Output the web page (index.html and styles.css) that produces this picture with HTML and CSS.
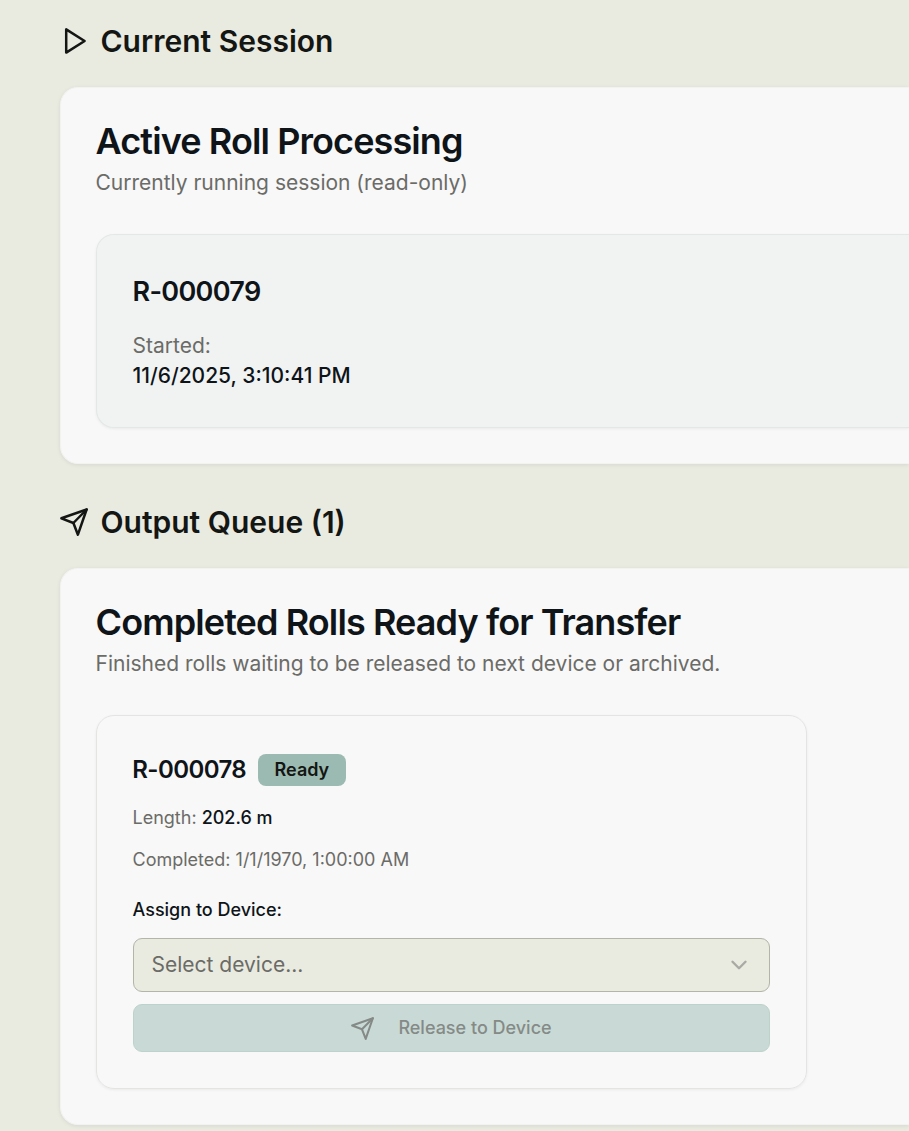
FILE: index.html
```html
<!DOCTYPE html>
<html lang="en">
<head>
  <meta charset="UTF-8">
  <title>Roll Queue</title>
  <link rel="stylesheet" href="styles.css">
</head>
<body>

<main class="page">
  <section class="section">
    <h2 class="section-title">
      <svg class="icon" viewBox="0 0 28 28"><path d="M6.2 2.4v23.2L24.6 14z"/></svg>
      Current Session
    </h2>
    <div class="card">
      <div class="card-title">Active Roll Processing</div>
      <p class="card-desc">Currently running session (read-only)</p>

      <div class="session">
        <div class="session-id">R-000079</div>
        <div class="session-label">Started:</div>
        <div class="session-value">11/6/2025, 3:10:41 PM</div>
      </div>
    </div>
  </section>

  <section class="section">
    <h2 class="section-title">
      <svg class="icon" viewBox="0 0 28 28"><path d="M26.6 1.5 1.4 10.3l12 4.7 4.5 11.7z"/><path d="M26.6 1.5 13.4 15"/></svg>
      Output Queue (1)
    </h2>
    <div class="card">
      <div class="card-title">Completed Rolls Ready for Transfer</div>
      <p class="card-desc">Finished rolls waiting to be released to next device or archived.</p>

      <div class="roll">
        <div class="roll-header">
          <span class="roll-id">R-000078</span>
          <span class="badge">Ready</span>
        </div>
        <div class="roll-row">Length: <strong>202.6 m</strong></div>
        <div class="roll-row">Completed: 1/1/1970, 1:00:00 AM</div>
        <div class="roll-label">Assign to Device:</div>
        <div class="select">
          <span>Select device...</span>
          <svg class="chevron" viewBox="0 0 24 24"><path d="m6 9 6 6 6-6"/></svg>
        </div>
        <button class="release-btn" disabled>
          <svg class="icon" viewBox="0 0 28 28"><path d="M26.6 1.5 1.4 10.3l12 4.7 4.5 11.7z"/><path d="M26.6 1.5 13.4 15"/></svg>
          <span>Release to Device</span>
        </button>
      </div>
    </div>
  </section>
</main>

</body>
</html>
```

FILE: styles.css
```css
* {
  margin: 0;
  padding: 0;
  box-sizing: border-box;
}

body {
  font-family: 'Inter', sans-serif;
  background-color: #e9eae0;
  color: #0f1419;
  height: 1131px;
  overflow: hidden;
}

.page {
  padding: 20px 0 0 60px;
}

.section {
  margin-bottom: 37px;
}

.section-title {
  display: flex;
  align-items: center;
  gap: 12.5px;
  height: 42px;
  margin-bottom: 25px;
  font-size: 30px;
  font-weight: 600;
  color: #141613;
}

.icon {
  width: 28px;
  height: 28px;
  flex-shrink: 0;
  fill: none;
  stroke: currentColor;
  stroke-width: 2.5;
  stroke-linecap: round;
  stroke-linejoin: round;
}

/* cards run off the right side of the window */
.card {
  background-color: #f8f8f8;
  border: 1px solid #f2f2f0;
  border-right: none;
  border-radius: 18px 0 0 18px;
  padding: 35px 0 35px 35px;
  box-shadow: 0 1px 4px rgba(0, 0, 0, 0.08);
}

.card-title {
  margin-left: -0.5px;
  font-size: 36px;
  line-height: 36px;
  font-weight: 600;
  letter-spacing: -0.9px;
}

.card-desc {
  margin-top: 9px;
  margin-left: -0.5px;
  font-size: 21px;
  line-height: 30px;
  color: #6b6b67;
}

.session {
  margin-top: 36px;
  height: 194px;
  padding: 36px 0 35px 35.5px;
  background-color: #f1f3f2;
  border: 1px solid #e3e8e6;
  border-right: none;
  border-radius: 18px 0 0 18px;
  box-shadow: 0 1px 3px rgba(0, 0, 0, 0.06);
}

.session-id {
  font-size: 27px;
  line-height: 42px;
  font-weight: 600;
  letter-spacing: -0.675px;
}

.session-label,
.session-value {
  font-size: 21px;
  line-height: 30px;
}

.session-label {
  margin-top: 18px;
  color: #6b6b67;
}

.session-value {
  font-weight: 500;
}

.roll {
  width: 711px;
  height: 374px;
  margin-top: 36px;
  padding: 36px 36px 35px;
  border: 1px solid #e4e4e3;
  border-radius: 18px;
  box-shadow: 0 1px 3px rgba(0, 0, 0, 0.06);
}

.roll-header {
  display: flex;
  align-items: center;
  gap: 12px;
  height: 36px;
  margin-left: -0.7px;
}

.roll-id {
  padding-bottom: 2px;
  font-size: 24px;
  font-weight: 600;
  letter-spacing: -0.6px;
}

.badge {
  height: 32px;
  padding: 0 16.5px;
  border-radius: 8px;
  background-color: #9bbab1;
  color: #141613;
  font-size: 18px;
  line-height: 32px;
  font-weight: 600;
}

.roll-row {
  margin-top: 18px;
  margin-left: -0.5px;
  font-size: 18px;
  line-height: 24px;
  color: #6b6b67;
}

.roll-row strong {
  font-weight: 500;
  color: #0f1419;
}

.roll-label {
  margin-top: 26px;
  margin-left: -0.5px;
  font-size: 18px;
  line-height: 24px;
  font-weight: 500;
}

.select {
  display: flex;
  align-items: center;
  justify-content: space-between;
  height: 54px;
  margin-top: 16px;
  padding: 0 17px 0 17.5px;
  background-color: #e9eae0;
  border: 1px solid #b3b5a7;
  border-radius: 9px;
  font-size: 21px;
  color: #6b6b67;
}

.select span,
.release-btn span {
  padding-bottom: 2px;
}

.chevron {
  width: 26px;
  height: 26px;
  fill: none;
  stroke: #a8aaa3;
  stroke-width: 2.2;
  stroke-linecap: round;
  stroke-linejoin: round;
}

.release-btn {
  display: flex;
  align-items: center;
  justify-content: center;
  gap: 24px;
  width: 100%;
  height: 48px;
  margin-top: 12px;
  background-color: #c9dad6;
  border: 1px solid #bdd2cb;
  border-radius: 9px;
  font-family: inherit;
  font-size: 18px;
  font-weight: 500;
  color: #858a87;
}

.release-btn .icon {
  width: 23px;
  height: 23px;
}
```
